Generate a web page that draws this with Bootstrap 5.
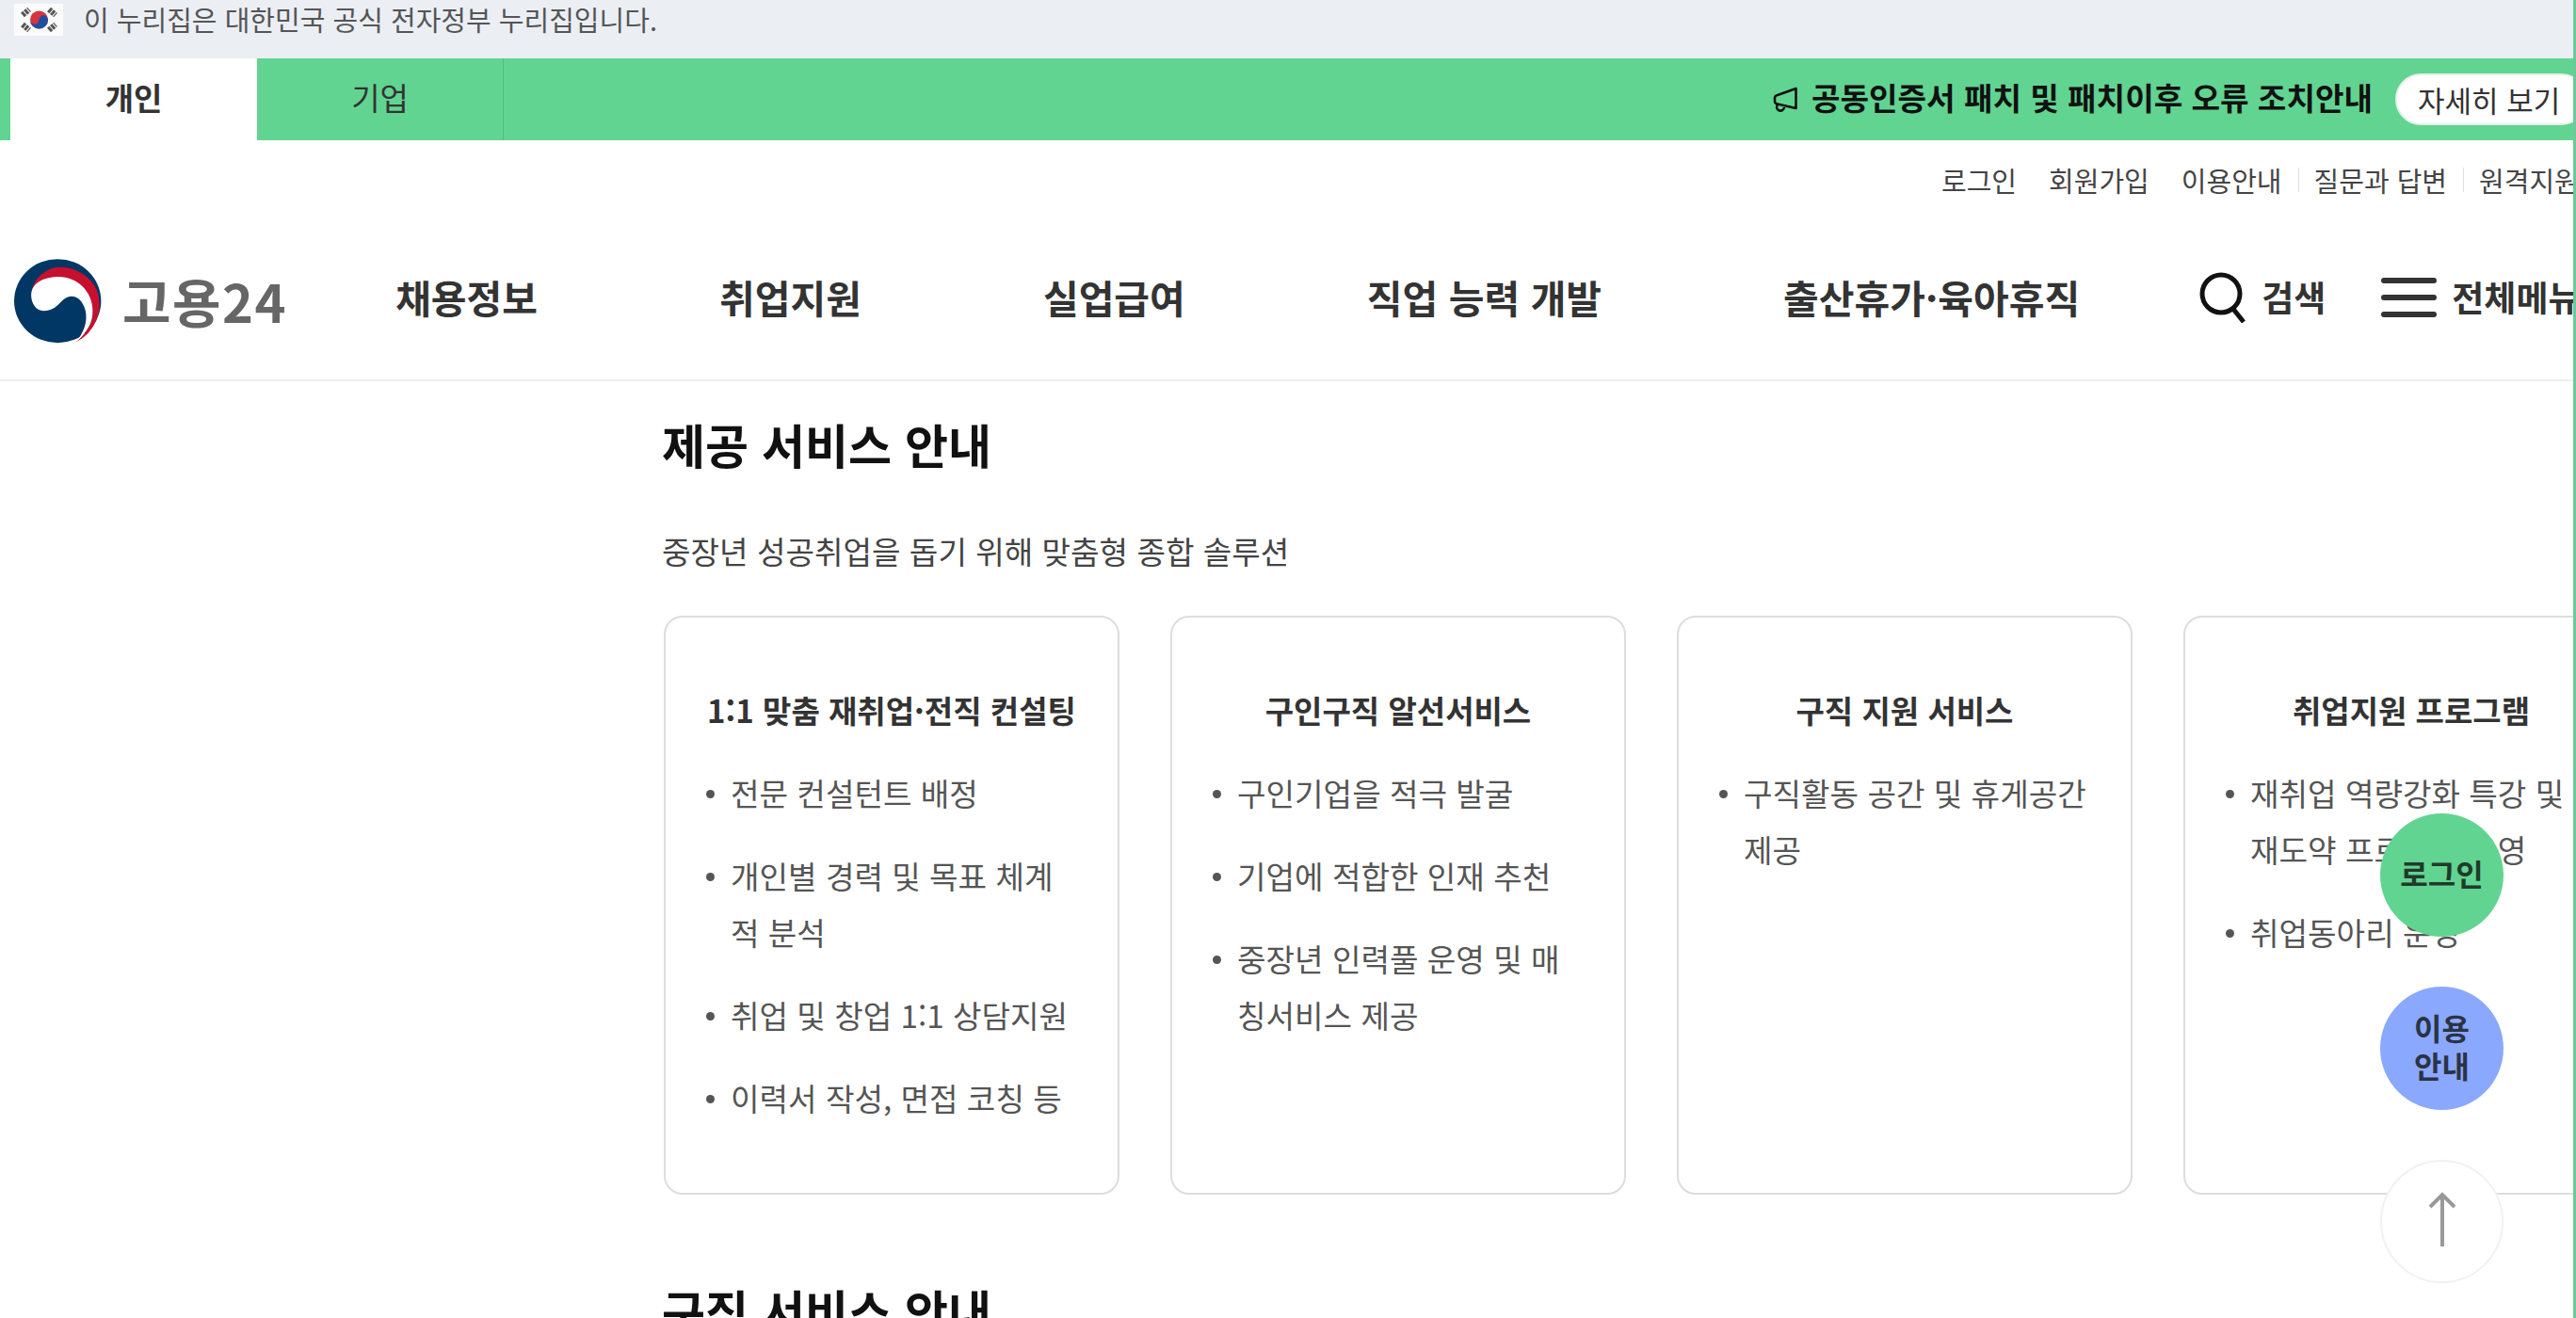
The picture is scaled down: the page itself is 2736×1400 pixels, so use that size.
<!DOCTYPE html>
<html lang="ko">
  <head>
    <meta charset="UTF-8" />
    <meta name="viewport" content="width=device-width, initial-scale=1.0" />
    <title>고용24</title>
    <link
      href="https://cdn.jsdelivr.net/npm/bootstrap@5.3.0/dist/css/bootstrap.min.css"
      rel="stylesheet"
    />
    <style>
      html, body { height: 100%; overflow: hidden; }
      body { font-family: "Noto Sans CJK KR", "Noto Sans", sans-serif; color: #333; background: #fff; }
      a { color: inherit; text-decoration: none; }
      .page-wrap { width: 2736px; height: 1400px; overflow: hidden; border-right: 3px solid #6cc99a; }

      .gov-bar { height: 62px; background: #ebeff4; padding: 0 0 20px 15px; gap: 22px; color: #555; font-size: 29px; }
      .gov-flag { width: 52px; height: 34px; background: #fff; flex: none; }

      .notice-bar { height: 87px; background: #62d491; padding-left: 11px; }
      .user-tab { width: 262px; font-size: 33px; color: #333; padding-bottom: 4px; }
      .user-tab.active-tab { background: #fff; font-weight: 700; }
      .user-tab.biz-tab { border-right: 1px solid #52bd7e; }
      .notice-icon { flex: none; margin-right: 15px; }
      .notice-text { font-size: 33.2px; font-weight: 700; color: #111; margin: 0 24px 6px 0; white-space: nowrap; }
      .more-btn { width: 204px; height: 55px; border-radius: 28px; background: #fff; border: 2px solid #e6efe9; color: #333; font-size: 31px; line-height: 1; padding: 0 0 0 22px; text-align: left; flex: none; margin-right: -15px; white-space: nowrap; }

      .util-row { height: 58px; padding: 21px 0 0 2062px; font-size: 29px; line-height: 43px; color: #444; white-space: nowrap; }
      .util-row a { margin-right: 34px; }
      .util-row .has-bar { position: relative; }
      .util-row .has-bar::after { content: ""; position: absolute; right: -18px; top: 8px; height: 26px; width: 1px; background: #ddd; }

      .main-nav { height: 198px; border-bottom: 2px solid #eee; padding: 22px 0 0 15px; white-space: nowrap; }
      .logo-mark { flex: none; margin-top: 8px; }
      .logo-type { font-size: 56px; font-weight: 700; color: #666; margin: 6px 0 0 22px; letter-spacing: 1.5px; }
      .nav-links { margin-left: 115px; gap: 193px; font-size: 41px; font-weight: 700; color: #333; }
      .nav-tools { font-size: 37px; font-weight: 700; color: #333; margin-left: 127px; }
      .tool-search { margin: 0 14px 0 0; flex: none; }
      .tool-menu { margin: 0 16px 0 59px; flex: none; }

      .content-area { padding-left: 703px; white-space: nowrap; }
      .sec-title { font-size: 50px; font-weight: 700; color: #111; margin: 0; padding-top: 31px; line-height: 70px; }
      .sec-title.next-sec { margin-top: 56px; }
      .sec-sub { font-size: 33.2px; color: #444; margin: 0; padding-top: 54px; line-height: 50px; }
      .svc-row { gap: 54px; margin: 44px 0 0 2px; }
      .svc-card { width: 484px; height: 615px; flex: none; border: 2px solid #ddd; border-radius: 20px; padding: 73px 44px 0 42px; white-space: normal; }
      .svc-title { font-size: 33px; font-weight: 700; color: #333; text-align: center; line-height: 50px; margin: 0 -2px 33px 0; white-space: nowrap; }
      .svc-list { list-style: none; margin: 0; padding: 0; }
      .svc-list li { font-size: 33.2px; line-height: 60px; color: #555; padding-left: 27px; margin-bottom: 28px; position: relative; word-break: break-all; }
      .svc-list li::before { content: ""; position: absolute; left: 1px; top: 27px; width: 9px; height: 9px; border-radius: 50%; background: #555; }

      .float-btn { position: fixed; left: 2528px; width: 131px; height: 131px; border-radius: 50%; font-size: 32px; font-weight: 700; line-height: 40px; color: #2b3346; text-align: center; padding-bottom: 6px; }
      .float-login { top: 864px; background: #62d491; color: #1f3b2b; }
      .float-guide { top: 1048px; background: #8ba8ff; }
      .float-top { top: 1232px; background: #fff; border: 2px solid #f1f1f1; }
    </style>
  </head>
  <body>
    <div class="page-wrap">
      <div class="gov-bar d-flex align-items-center">
        <svg class="gov-flag" viewBox="0 0 52 34">
          <rect width="52" height="34" fill="#fbfbfb" />
          <circle cx="26.5" cy="17" r="9.5" fill="#d6343f" />
          <path d="M17 17a9.500 9.500 0 0 0 19 0a4.750 4.750 0 0 0-9.500 0a4.750 4.750 0 0 1-9.500 0z" fill="#1f4fa0" />
          <g stroke="#555" stroke-width="6" stroke-dasharray="3 1">
            <path d="M9 12l7-6M37 6l7 6M9 22l7 6M37 28l7-6" />
          </g>
        </svg>
        <span>이 누리집은 대한민국 공식 전자정부 누리집입니다.</span>
      </div>

      <div class="notice-bar d-flex align-items-stretch">
        <a class="user-tab active-tab d-flex align-items-center justify-content-center" href="#">개인</a>
        <a class="user-tab biz-tab d-flex align-items-center justify-content-center" href="#">기업</a>
        <div class="flex-grow-1 d-flex align-items-center justify-content-end">
          <svg class="notice-icon" width="28" height="28" viewBox="0 0 28 28" fill="none" stroke="#111" stroke-width="2.600" stroke-linejoin="round">
            <path d="M26.500 2v21L7 18.500a3 3 0 0 1-3-3v-3a3 3 0 0 1 3-3.500zM7 19a4 4 0 1 0 7 3" />
          </svg>
          <span class="notice-text">공동인증서 패치 및 패치이후 오류 조치안내</span>
          <button class="more-btn" type="button">자세히 보기</button>
        </div>
      </div>

      <div class="util-row">
        <a href="#">로그인</a><a href="#">회원가입</a><a href="#" class="has-bar">이용안내</a><a href="#" class="has-bar">질문과 답변</a><a href="#">원격지원</a>
      </div>

      <nav class="main-nav d-flex align-items-center">
        <svg class="logo-mark" width="93" height="90" viewBox="45 48 282 272">
          <ellipse cx="185" cy="183" rx="140" ry="135" fill="#003764" />
          <path d="M100 165C102 115 145 74 195 74C250 74 298 112 312 150A140 135 0 0 1 243 316C285 280 300 250 298 215C295 150 245 105 190 105C140 105 100 130 100 165Z" fill="#c8102e" />
          <path d="M100 165C100 125 140 105 190 105C245 105 298 150 298 215C298 250 285 280 243 316C270 285 282 250 275 215C268 185 250 168 230 168C195 168 190 215 140 215C115 215 100 190 100 165Z" fill="#fff" />
        </svg>
        <span class="logo-type">고용24</span>
        <div class="nav-links d-flex">
          <a href="#">채용정보</a>
          <a href="#">취업지원</a>
          <a href="#">실업급여</a>
          <a href="#">직업 능력 개발</a>
          <a href="#">출산휴가·육아휴직</a>
        </div>
        <div class="nav-tools d-flex align-items-center">
          <svg class="tool-search" width="52" height="54" viewBox="0 0 52 54" fill="none" stroke="#111" stroke-width="5">
            <circle cx="23" cy="23" r="20" /><path d="M35 38l12 15" />
          </svg>
          <span>검색</span>
          <svg class="tool-menu" width="59" height="42" viewBox="0 0 59 42" fill="#333">
            <rect width="59" height="6" rx="3" /><rect y="18" width="59" height="6" rx="3" /><rect y="36" width="59" height="6" rx="3" />
          </svg>
          <span>전체메뉴</span>
        </div>
      </nav>

      <main class="content-area">
        <h2 class="sec-title">제공 서비스 안내</h2>
        <p class="sec-sub">중장년 성공취업을 돕기 위해 맞춤형 종합 솔루션</p>
        <div class="svc-row d-flex">
          <div class="svc-card">
            <h3 class="svc-title">1:1 맞춤 재취업·전직 컨설팅</h3>
            <ul class="svc-list">
              <li>전문 컨설턴트 배정</li>
              <li>개인별 경력 및 목표 체계적 분석</li>
              <li>취업 및 창업 1:1 상담지원</li>
              <li>이력서 작성, 면접 코칭 등</li>
            </ul>
          </div>
          <div class="svc-card">
            <h3 class="svc-title">구인구직 알선서비스</h3>
            <ul class="svc-list">
              <li>구인기업을 적극 발굴</li>
              <li>기업에 적합한 인재 추천</li>
              <li>중장년 인력풀 운영 및 매칭서비스 제공</li>
            </ul>
          </div>
          <div class="svc-card">
            <h3 class="svc-title">구직 지원 서비스</h3>
            <ul class="svc-list">
              <li>구직활동 공간 및 휴게공간 제공</li>
            </ul>
          </div>
          <div class="svc-card">
            <h3 class="svc-title">취업지원 프로그램</h3>
            <ul class="svc-list">
              <li>재취업 역량강화 특강 및 재도약 프로그램 운영</li>
              <li>취업동아리 운영</li>
            </ul>
          </div>
        </div>
        <h2 class="sec-title next-sec">구직 서비스 안내</h2>
      </main>
    </div>

    <a href="#" class="float-btn float-login d-flex align-items-center justify-content-center">로그인</a>
    <a href="#" class="float-btn float-guide d-flex align-items-center justify-content-center">이용<br />안내</a>
    <a href="#" class="float-btn float-top d-flex align-items-center justify-content-center">
      <svg width="30" height="58" viewBox="0 0 30 58" fill="none" stroke="#999" stroke-width="4"><path d="M15 58V3M2 16L15 3l13 13" /></svg>
    </a>

    <script src="https://cdn.jsdelivr.net/npm/bootstrap@5.3.0/dist/js/bootstrap.bundle.min.js"></script>
  </body>
</html>
